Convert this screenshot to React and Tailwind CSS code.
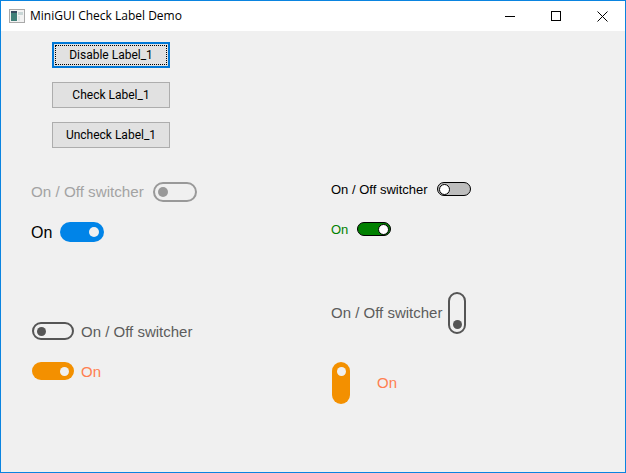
import React from "react";

function WindowIcon() {
  return (
    <svg width="16" height="16" viewBox="0 0 16 16" className="mr-[5px] shrink-0">
      <rect x="0.5" y="1.5" width="15" height="13" fill="#f2f2f2" stroke="#a9a9a9" />
      <rect x="2" y="4" width="6" height="9" fill="#3f7f78" />
      <rect x="2" y="3" width="6" height="2" fill="#34495e" />
      <rect x="9" y="4" width="5" height="3" fill="#c9d6d6" />
      <rect x="9" y="8" width="2" height="5" fill="#dfe6e6" />
    </svg>
  );
}

function TitleBar() {
  return (
    <div className="h-[30px] bg-white flex items-center shrink-0">
      <div className="flex items-center flex-1 pl-[8px] text-[12px] text-black font-['Open_Sans',sans-serif]">
        <WindowIcon />
        <span>MiniGUI Check Label Demo</span>
      </div>
      <div className="w-[46px] flex justify-center">
        <div className="w-[10px] h-px bg-black" />
      </div>
      <div className="w-[46px] flex justify-center">
        <div className="w-[10px] h-[10px] border border-black" />
      </div>
      <div className="w-[46px] flex justify-center">
        <svg width="11" height="11" viewBox="0 0 11 11">
          <path d="M0.5 0.5 L10.5 10.5 M10.5 0.5 L0.5 10.5" stroke="#000" fill="none" />
        </svg>
      </div>
    </div>
  );
}

function DemoButton({ label, focused }) {
  if (focused) {
    return (
      <button className="w-[118px] h-[26px] bg-[#e1e1e1] border-2 border-[#0078d7] p-px text-[12px] text-black font-['Roboto',sans-serif]">
        <span className="w-full h-full flex items-center justify-center border border-dotted border-black">
          {label}
        </span>
      </button>
    );
  }
  return (
    <button className="w-[118px] h-[26px] bg-[#e1e1e1] border border-[#adadad] flex items-center justify-center text-[12px] text-black font-['Roboto',sans-serif]">
      {label}
    </button>
  );
}

export default function App() {
  return (
    <div className="w-[626px] h-[473px] border border-[#0a84e0] flex flex-col bg-[#f0f0f0] overflow-hidden font-['Liberation_Sans',sans-serif]">
      <TitleBar />

      <div className="flex flex-col gap-[14px] pl-[51px] pt-[11px]">
        <DemoButton label="Disable Label_1" focused />
        <DemoButton label="Check Label_1" />
        <DemoButton label="Uncheck Label_1" />
      </div>

      <div className="grid grid-cols-[300px_1fr] pl-[30px] pt-[34px]">
        {/* left column */}
        <div className="flex flex-col">
          <div className="h-[20px] flex items-center text-[15.2px] text-[#a3a3a3] leading-none">
            <span>On / Off switcher</span>
            <div className="ml-[9px] w-[44px] h-[20px] rounded-full border-2 border-[#999999] flex items-center pl-[3px]">
              <div className="w-[10px] h-[10px] rounded-full bg-[#999999]" />
            </div>
          </div>

          <div className="h-[20px] mt-[20px] flex items-center text-[16px] text-black leading-none">
            <span className="pt-px">On</span>
            <div className="ml-[8px] w-[44px] h-[20px] rounded-full bg-[#0084e8] flex items-center justify-end pr-[5px]">
              <div className="w-[10px] h-[10px] rounded-full bg-[#f0f0f0]" />
            </div>
          </div>

          <div className="h-[18px] mt-[80px] pl-px flex items-center text-[15px] text-[#5c5c5c] leading-none">
            <div className="w-[42px] h-[18px] rounded-full border-2 border-[#555555] flex items-center pl-[3px]">
              <div className="w-[9px] h-[9px] rounded-full bg-[#555555]" />
            </div>
            <span className="ml-[7px]">On / Off switcher</span>
          </div>

          <div className="h-[18px] mt-[22px] pl-px flex items-center text-[15px] text-[#ff7f50] leading-none">
            <div className="w-[42px] h-[18px] rounded-full bg-[#f39000] flex items-center justify-end pr-[5px]">
              <div className="w-[9px] h-[9px] rounded-full bg-[#f0f0f0]" />
            </div>
            <span className="ml-[7px]">On</span>
          </div>
        </div>

        {/* right column */}
        <div className="flex flex-col">
          <div className="h-[14px] flex items-center text-[13px] text-black leading-none">
            <span>On / Off switcher</span>
            <div className="ml-[9px] w-[34px] h-[14px] rounded-full border border-black bg-[#bdbdbd] flex items-center pl-px">
              <div className="w-[11px] h-[11px] rounded-full bg-white border border-black" />
            </div>
          </div>

          <div className="h-[14px] mt-[26px] flex items-center text-[13px] text-[#008000] leading-none">
            <span>On</span>
            <div className="ml-[9px] w-[34px] h-[14px] rounded-full border border-black bg-[#008000] flex items-center justify-end pr-px">
              <div className="w-[11px] h-[11px] rounded-full bg-white border border-black" />
            </div>
          </div>

          <div className="h-[42px] mt-[56px] flex items-center text-[15px] text-[#5c5c5c] leading-none">
            <span className="pb-[2px]">On / Off switcher</span>
            <div className="ml-[6px] w-[18px] h-[42px] rounded-full border-2 border-[#555555] flex flex-col items-center justify-end pb-[3px]">
              <div className="w-[9px] h-[9px] rounded-full bg-[#555555]" />
            </div>
          </div>

          <div className="h-[42px] mt-[28px] pl-px flex items-center text-[15px] text-[#ff7f50] leading-none">
            <div className="w-[18px] h-[42px] rounded-full bg-[#f39000] flex flex-col items-center pt-[5px]">
              <div className="w-[9px] h-[9px] rounded-full bg-[#f0f0f0]" />
            </div>
            <span className="ml-[27px] pb-[2px]">On</span>
          </div>
        </div>
      </div>
    </div>
  );
}
